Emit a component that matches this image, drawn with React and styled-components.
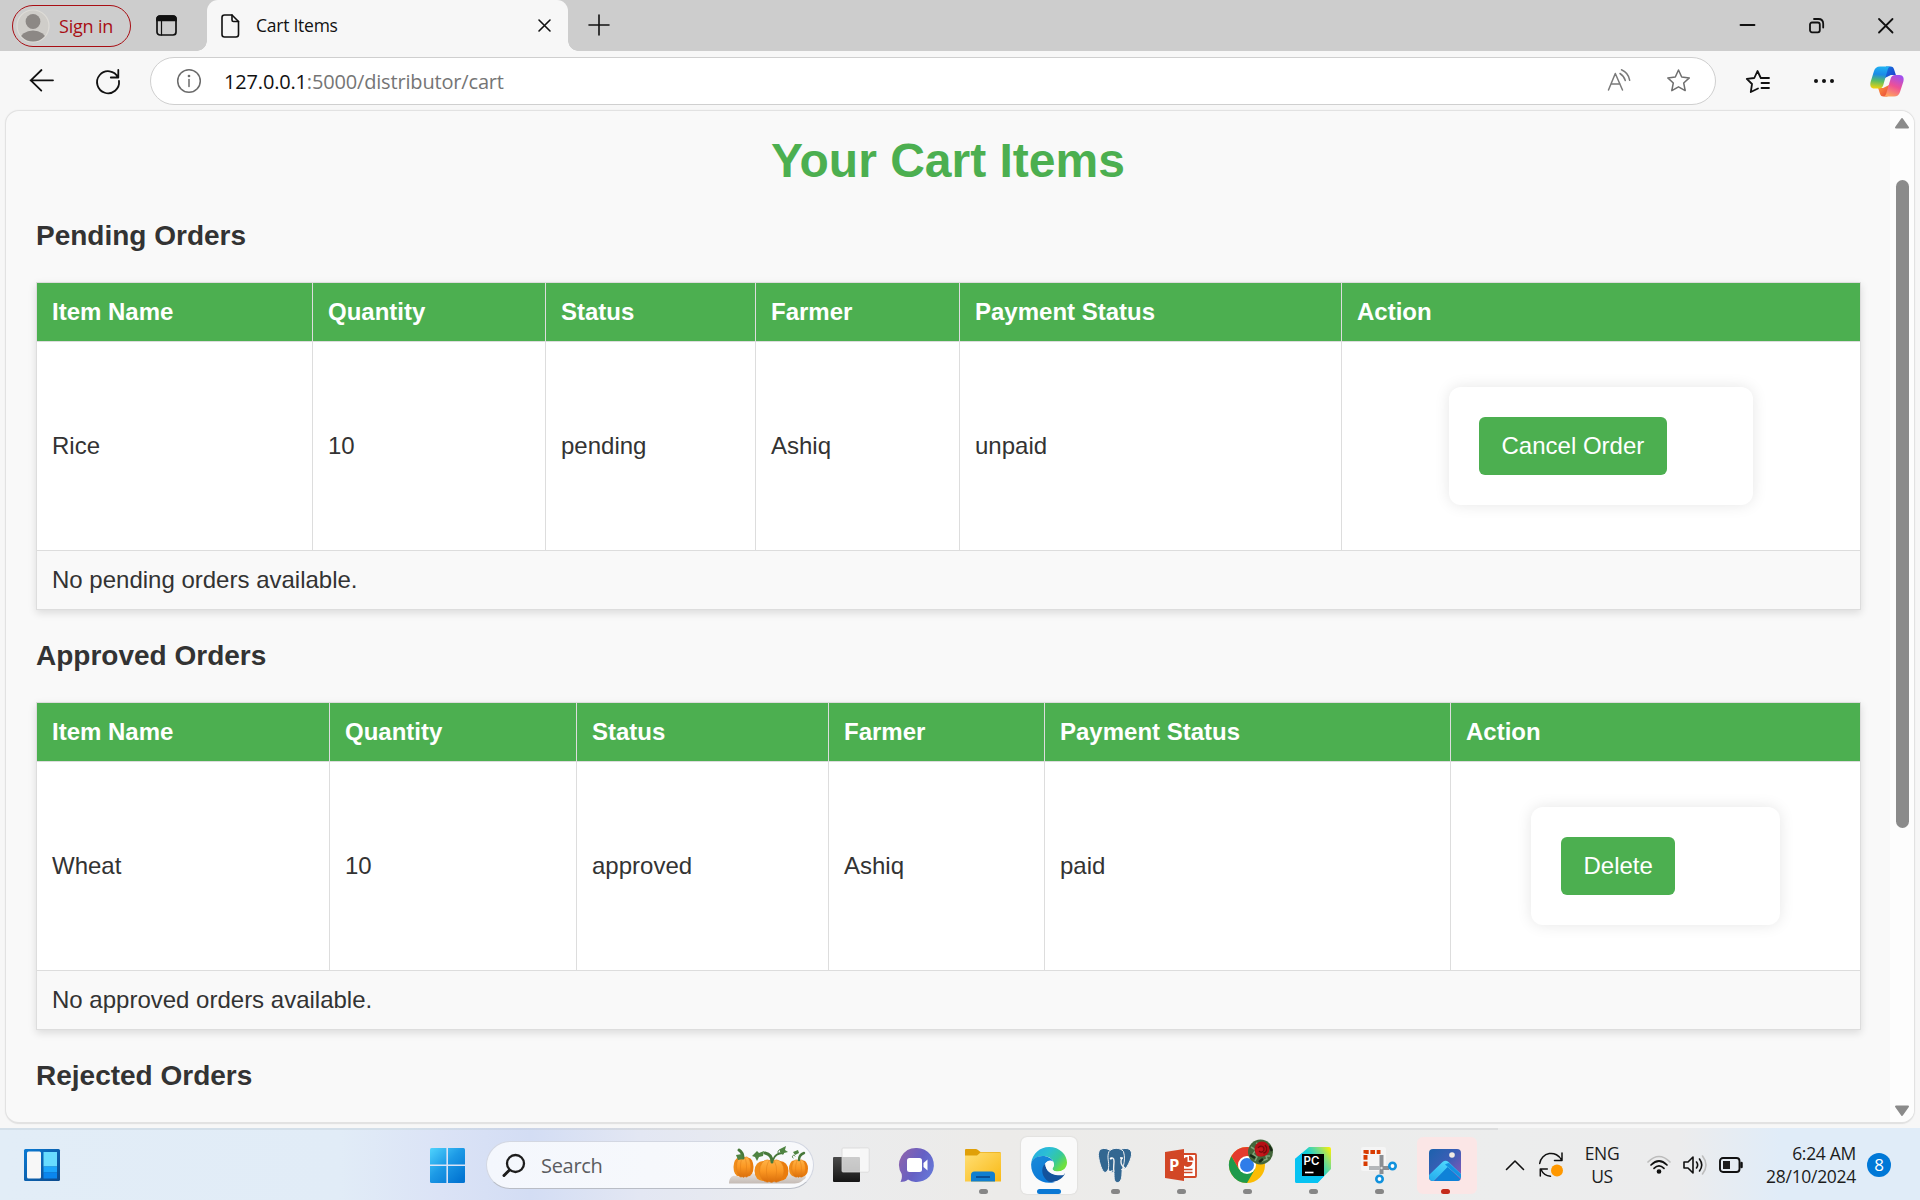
import React from 'react';
import styled, { createGlobalStyle, css } from 'styled-components';

const GlobalStyle = createGlobalStyle`
  * { box-sizing: border-box; }
  body { margin: 0; overflow: hidden; background: #f7f7f7; }
  svg { display: block; flex: none; overflow: visible; }
`;

const uiFont = css`font-family: 'Open Sans', 'Noto Sans', sans-serif;`;

const Screen = styled.div`
  width: 1920px;
  height: 1200px;
  display: flex;
  flex-direction: column;
  background: #f7f7f7;
  overflow: hidden;
`;

/* ---------- Tab strip ---------- */
const TabStrip = styled.header`
  height: 51px;
  flex: none;
  display: flex;
  background: #cdcdcd;
  ${uiFont}
`;

const SignIn = styled.button`
  display: flex;
  align-items: center;
  gap: 9px;
  width: 119px;
  height: 42px;
  margin: 5px 0 0 12px;
  padding: 0 0 1px 3px;
  border: 1.5px solid #a80e14;
  border-radius: 21px;
  background: transparent;
  color: #a80e14;
  ${uiFont}
  font-size: 18px;
  letter-spacing: -0.2px;
  white-space: nowrap;
`;

const Workspaces = styled.div`
  width: 76px;
  padding: 15px 0 0 25px;
`;

const Tab = styled.div`
  position: relative;
  width: 361px;
  height: 51px;
  display: flex;
  align-items: center;
  padding: 0 16px 0 13px;
  border-radius: 11px 11px 0 0;
  background: #f7f7f7;
  &::before, &::after {
    content: '';
    position: absolute;
    bottom: 0;
    width: 10px;
    height: 10px;
  }
  &::before { left: -10px; background: radial-gradient(circle at 0 0, transparent 9.5px, #f7f7f7 10px); }
  &::after { right: -10px; background: radial-gradient(circle at 100% 0, transparent 9.5px, #f7f7f7 10px); }
`;

const TabTitle = styled.span`
  flex: 1;
  margin: 0 0 1px 16px;
  font-size: 17.5px;
  letter-spacing: -0.25px;
  color: #111;
`;

const NewTab = styled.div`padding: 15px 0 0 21px;`;

const WindowControls = styled.div`
  display: flex;
  gap: 54px;
  margin-left: auto;
  padding: 18px 27px 0 0;
`;

/* ---------- Toolbar ---------- */
const Toolbar = styled.div`
  height: 59px;
  flex: none;
  display: flex;
  align-items: flex-start;
  padding-left: 30px;
  ${uiFont}
`;

const NavButtons = styled.div`
  display: flex;
  gap: 42px;
  width: 120px;
  padding-top: 18px;
`;

const AddressBar = styled.div`
  width: 1566px;
  height: 48px;
  margin-top: 6px;
  display: flex;
  align-items: center;
  padding: 0 25px 0 26px;
  border: 1.5px solid #cfcfcf;
  border-radius: 24px;
  background: #fff;
`;

const Url = styled.span`
  flex: 1;
  margin-left: 23px;
  font-size: 20px;
  letter-spacing: -0.17px;
  color: #757575;
  b { font-weight: 400; color: #111; }
`;

const BarIcons = styled.div`display: flex; gap: 36px;`;

const ToolIcons = styled.div`
  display: flex;
  align-items: center;
  height: 60px;
  margin-left: 30px;
`;

const Spacer = styled.i`width: ${(p) => p.$w}px; flex: none;`;

/* ---------- Page ---------- */
const Viewport = styled.main`
  width: 1910px;
  height: 1014px;
  margin: 0 0 4px 5px;
  flex: none;
  display: flex;
  overflow: hidden;
  border: 1px solid #e2e2e2;
  border-bottom-width: 2px;
  border-radius: 14px;
  background: #f9f9f9;
  box-shadow: 0 0 2px rgba(0, 0, 0, 0.05);
`;

const Page = styled.div`
  flex: 1;
  padding: 22px 30px 0 30px;
  overflow: hidden;
  color: #333;
  font-family: 'Liberation Sans', Arial, sans-serif;
  font-size: 24px;
`;

const Title = styled.h1`
  margin: 0 0 31px;
  font-size: 48px;
  line-height: 56px;
  text-align: center;
  color: #4caf50;
`;

const Heading = styled.h3`
  margin: 0;
  font-size: 28px;
  line-height: 32px;
`;

const Table = styled.table`
  width: 1825px;
  margin: 30px 0;
  table-layout: fixed;
  border-collapse: separate;
  border-spacing: 0;
  border: solid #ddd;
  border-width: 1px 0 0 1px;
  background: #fff;
  box-shadow: 0 3px 8px rgba(0, 0, 0, 0.12);
`;

const cell = css`
  padding: 0 15px;
  text-align: left;
  border: solid #ddd;
  border-width: 0 1px 1px 0;
`;

const Th = styled.th`
  ${cell}
  height: 59px;
  background: #4caf50;
  color: #fff;
`;

const Td = styled.td`
  ${cell}
  height: ${(p) => (p.$note ? 59 : 209)}px;
  background: ${(p) => (p.$note ? '#f9f9f9' : '#fff')};
`;

const ActionCard = styled.div`
  width: ${(p) => p.$w}px;
  margin: 0 auto;
  padding: 30px;
  border-radius: 12px;
  background: #fff;
  box-shadow: 0 0 15px rgba(0, 0, 0, 0.1);
`;

const ActionButton = styled.button`
  display: block;
  height: 58px;
  padding: 0 22.5px;
  border: 0;
  border-radius: 6px;
  background: #4caf50;
  color: #fff;
  font: inherit;
`;

const ScrollTrack = styled.div`
  width: 24px;
  display: flex;
  flex-direction: column;
  align-items: center;
  padding: 7px 0 6px;
  background: #fdfdfd;
`;

const Thumb = styled.div`
  width: 13px;
  height: 648px;
  margin: 52px 0 auto;
  border-radius: 7px;
  background: #8b8b8b;
`;

/* ---------- Taskbar ---------- */
const Taskbar = styled.footer`
  height: 72px;
  flex: none;
  display: flex;
  border-top: 2px solid #d6dde5;
  border-image: linear-gradient(90deg, #d3dfe9 0 400px, #cad4e8 520px, #dcddde 700px 1497px, transparent 1497px) 1;
  background: linear-gradient(90deg, #e2edf7 0, #e1ecf7 340px, #dbe3f6 440px, #d3ddf4 530px, #e3e7f3 640px, #ebecee 800px, #ecebe9 1000px, #eceded 1500px, #ececed 1680px, #e0ecf8 1780px, #e0ecf8 100%);
  ${uiFont}
  color: #1c1c1c;
`;

const WidgetsButton = styled.div`width: 430px; padding: 19px 0 0 24px;`;
const StartButton = styled.div`width: 56px; padding-top: 18px;`;

const SearchBox = styled.div`
  width: 328px;
  height: 48px;
  margin: 11px 4px 0 0;
  padding: 0 4px 0 16px;
  display: flex;
  align-items: center;
  border: 1.5px solid #d3d7e2;
  border-bottom-color: #b9bdc6;
  border-radius: 24px;
  background: linear-gradient(90deg, #f4f7fd, #f8f9fb);
`;

const SearchText = styled.span`
  flex: 1;
  margin: 0 0 0 16px;
  font-size: 20px;
  letter-spacing: -0.3px;
  color: #5b5c60;
`;

const Apps = styled.nav`display: flex;`;

const AppTile = styled.div`
  width: 56px;
  height: 57px;
  margin: 7px 5px 0;
  padding-top: 10px;
  display: flex;
  flex-direction: column;
  align-items: center;
  justify-content: space-between;
  border-radius: 6px;
  ${(p) => p.$state === 'active' && css`background: #fafafa; box-shadow: 0 0 2px rgba(0, 0, 0, 0.14);`}
  ${(p) => p.$state === 'alert' && css`background: #fbe6e6; box-shadow: 4px 0 0 #fbe6e6;`}
`;

const Indicator = styled.div`
  width: ${(p) => (p.$state === 'active' ? 24 : 9)}px;
  height: 5px;
  border-radius: 3px;
  background: ${(p) => ({ active: '#0a78d4', alert: '#c42b1c', open: '#868686' }[p.$state] || 'transparent')};
`;

const Tray = styled.div`
  flex: 1;
  display: flex;
  align-items: center;
  height: 69px;
  padding-left: 28px;
`;

const TrayText = styled.div`
  width: ${(p) => p.$w}px;
  flex: none;
  text-align: ${(p) => p.$align};
  font-size: 17.5px;
  line-height: 22.5px;
  letter-spacing: ${(p) => p.$track}px;
  white-space: nowrap;
`;

const Badge = styled.div`
  width: 24px;
  height: 24px;
  border-radius: 50%;
  display: flex;
  align-items: center;
  justify-content: center;
  background: #0078d7;
  color: #fff;
  font-size: 17px;
  line-height: 24px;
`;

/* ---------- Icons ---------- */
const Line = ({ w, h, sw = 1.6, c = '#111', children }) => (
  <svg width={w} height={h} viewBox={`0 0 ${w} ${h}`} fill="none" stroke={c} strokeWidth={sw} strokeLinecap="round" strokeLinejoin="round">{children}</svg>
);

const Avatar = () => (
  <svg width="34" height="34" viewBox="0 0 34 34">
    <defs><clipPath id="av"><circle cx="17" cy="17" r="15.5" /></clipPath></defs>
    <circle cx="17" cy="17" r="16" fill="#cfcdc9" stroke="#dedcd7" strokeWidth="1.2" />
    <g fill="#8c8885" clipPath="url(#av)"><circle cx="17" cy="12.5" r="7.4" /><ellipse cx="17" cy="31" rx="13" ry="9.5" /></g>
  </svg>
);

const STAR = 'M11.5 1 L14.7 8 L22.3 8.9 L16.7 14 L18.2 21.6 L11.5 17.8 L4.8 21.6 L6.3 14 L0.8 8.9 L8.3 8 Z';

const Copilot = () => (
  <svg width="34" height="31" viewBox="0 0 34 31">
    <defs>
      <linearGradient id="cpA" x1="0.4" y1="0" x2="0.3" y2="1"><stop offset="0" stopColor="#1fb1f2" /><stop offset=".35" stopColor="#1c8ae6" /><stop offset=".65" stopColor="#5bbd63" /><stop offset="1" stopColor="#f4d30b" /></linearGradient>
      <linearGradient id="cpB" x1="0.7" y1="0" x2="0.3" y2="1"><stop offset="0" stopColor="#a04ff0" /><stop offset=".5" stopColor="#ee5096" /><stop offset="1" stopColor="#ffa45c" /></linearGradient>
      <linearGradient id="cpC" x1="0" y1="0" x2="1" y2="1"><stop offset="0" stopColor="#1577e0" /><stop offset="1" stopColor="#1f3ccb" /></linearGradient>
      <linearGradient id="cpD" x1="0" y1="0" x2="1" y2="1"><stop offset="0" stopColor="#ff9b3d" /><stop offset="1" stopColor="#e8453c" /></linearGradient>
    </defs>
    <path d="M16 .5h4.500c2.300 0 3 1.200 3.600 3l1.800 5.500h-5l-6 3z" fill="url(#cpC)" />
    <path d="M17.500 30.500h-4c-2.300 0-3-1.200-3.600-3l-1.800-5.500h5l6-3z" fill="url(#cpD)" />
    <path d="M10 .5h11c-2 0-2.800 1.500-3.400 3.500l-4.300 15c-.7 2.400-2 3.600-4.600 3.600H4.500C.8 22.600-.3 19.600.6 16L4 5C5 2 6.800.5 10 .5z" fill="url(#cpA)" />
    <path d="M24 30.500H13c2 0 2.800-1.500 3.400-3.500l4.300-14.500c.7-2.400 2-3.600 4.600-3.600h4.200c3.700 0 4.800 3 3.900 6.600L30 26c-1 3-2.800 4.500-6 4.500z" fill="url(#cpB)" />
  </svg>
);

const Widgets = () => (
  <svg width="36" height="32" viewBox="0 0 36 32">
    <defs><linearGradient id="wg" x1="0" y1="0" x2="1" y2="1"><stop offset="0" stopColor="#0a7ad4" /><stop offset="1" stopColor="#0d4a8c" /></linearGradient></defs>
    <rect width="36" height="32" rx="1.5" fill="url(#wg)" />
    <rect x="3" y="2.5" width="14" height="27" rx="1.5" fill="#f7f7f7" />
    <path d="M19.500 3h13.500v14.500h-13.500z" fill="#68dcff" /><path d="M19.500 17.500h13.500v6h-13.500z" fill="#1ba5fb" /><path d="M19.500 23.500h13.500v6h-13.500z" fill="#0a86ee" />
  </svg>
);

const Start = () => (
  <svg width="35" height="35" viewBox="0 0 35 35">
    <defs><linearGradient id="st" gradientUnits="userSpaceOnUse" x1="0" y1="0" x2="30" y2="33"><stop offset="0" stopColor="#4fd3fd" /><stop offset=".5" stopColor="#1d9ae6" /><stop offset="1" stopColor="#0375d2" /></linearGradient></defs>
    <g fill="url(#st)"><path d="M1.500 0h14.900v16.400H0V1.500Q0 0 1.500 0z" /><path d="M18 0h15.500Q35 0 35 1.500v14.900H18z" /><path d="M0 18h16.400v17H1.500Q0 35 0 33.500z" /><path d="M18 18h17v15.500Q35 35 33.500 35H18z" /></g>
  </svg>
);

const Pumpkin = ({ x, y, rx, ry }) => (
  <g transform={`translate(${x} ${y})`}>
    <ellipse cx={-rx * 0.5} rx={rx * 0.5} ry={ry * 0.88} fill="#f08c1a" />
    <ellipse cx={rx * 0.5} rx={rx * 0.5} ry={ry * 0.88} fill="#ea7c0c" />
    <ellipse cx={-rx * 0.25} rx={rx * 0.45} ry={ry * 0.97} fill="url(#pk)" stroke="#e07c16" strokeWidth=".5" />
    <ellipse cx={rx * 0.28} rx={rx * 0.45} ry={ry * 0.97} fill="url(#pk)" stroke="#e07c16" strokeWidth=".5" />
    <ellipse rx={rx * 0.3} ry={ry} fill="url(#pk)" stroke="#e07c16" strokeWidth=".5" />
  </g>
);

const Pumpkins = () => (
  <svg width="80" height="38" viewBox="0 0 80 38">
    <defs>
      <linearGradient id="pk" x1="0" y1="0" x2="0" y2="1"><stop offset="0" stopColor="#ffb347" /><stop offset=".5" stopColor="#fb9722" /><stop offset="1" stopColor="#d96d0a" /></linearGradient>
      <linearGradient id="rk" x1="0" y1="0" x2="0" y2="1"><stop offset="0" stopColor="#eeeae6" /><stop offset="1" stopColor="#c4bbb5" /></linearGradient>
    </defs>
    <path d="M0 37.500C0 30 5 28 10 31c4-5 14-6 19-1 6-5 22-6 28-1 4-5 11-6 14-1 6 0 8 4 3 6-2 3-7 3.500-12 3.500z" fill="url(#rk)" />
    <Pumpkin x={14.5} y={21} rx={10} ry={10.500} />
    <Pumpkin x={69.5} y={22.5} rx={9.5} ry={9} />
    <Pumpkin x={42.5} y={25} rx={17} ry={11.5} />
    <g fill="none" stroke="#47783a" strokeLinecap="round">
      <path d="M14 12C14 8 13 6 10 4" strokeWidth="3" />
      <path d="M43 16c0-5-2-8-7-9" strokeWidth="3" />
      <path d="M44 14c2-6 7-7 10-7" strokeWidth="1.800" />
      <path d="M70 14c0-4 2-6 5-7" strokeWidth="2.400" />
      <path d="M49 7c-1-4 5-5 4-1M64 12c-2-2 1-4 2-2" strokeWidth="1" />
    </g>
    <g fill="#4f8442"><path d="M23 10l5-5 2 2 5-2-1 5-4 1-2 4-2-4z" /><path d="M51 3l6-3-1 4 3 2-4 1-1 2-3-3z" /><path d="M7 9l6-1 1 5-5 1z" /><path d="M64 6l5-2 1 3-4 2z" /></g>
  </svg>
);

const TaskView = () => (
  <svg width="36" height="36" viewBox="0 0 36 36">
    <defs><linearGradient id="tv" x1="0" y1="0" x2="0" y2="1"><stop offset="0" stopColor="#4b4b4b" /><stop offset="1" stopColor="#151515" /></linearGradient></defs>
    <rect x="0" y="10" width="27" height="25" rx="1" fill="url(#tv)" />
    <rect x="9" y="1" width="27" height="24" rx="1" fill="#fff" fillOpacity=".72" stroke="#d5d5d5" strokeWidth=".8" />
    <rect x="27" y="1.5" width="8.5" height="23" fill="#f5f5f5" fillOpacity=".7" />
  </svg>
);

const Chat = () => (
  <svg width="36" height="36" viewBox="0 0 36 36">
    <defs><linearGradient id="ch" x1="0" y1="0.2" x2="1" y2=".7"><stop offset="0" stopColor="#8d63ac" /><stop offset=".55" stopColor="#6560c4" /><stop offset="1" stopColor="#6678d8" /></linearGradient></defs>
    <path d="M18 1a17 17 0 1 1-9 31.500c-2 1.800-5 2.500-7.500 2.500 1.200-2.500 1.800-5 1.200-8A17 17 0 0 1 18 1z" fill="url(#ch)" />
    <rect x="8" y="11" width="15" height="14" rx="2.5" fill="#fff" /><path d="M24.500 16l4-3.500v11l-4-3.500z" fill="#fff" />
  </svg>
);

const Folder = () => (
  <svg width="36" height="36" viewBox="0 0 36 36">
    <defs><linearGradient id="fo" x1="0" y1="0" x2="1" y2="1"><stop offset="0" stopColor="#ffdf75" /><stop offset="1" stopColor="#f9b915" /></linearGradient></defs>
    <path d="M0 3q0-1 1-1h9.500q1.500 0 2.500 1l2.500 2H34.500q1.500 0 1.500 1.500V12H0z" fill="#e0a008" />
    <path d="M0 8.500h12l3.500-3H35q1 0 1 1V34.500H0z" fill="url(#fo)" />
    <path d="M6 34.500V28q0-3.500 3.500-3.500h17Q30 24.500 30 28v6.500z" fill="#0f7fd0" /><path d="M11 30h14" stroke="#0b4a8e" strokeWidth="1.800" />
  </svg>
);

const Edge = () => (
  <svg width="36" height="36" viewBox="0 0 36 36">
    <defs>
      <linearGradient id="e1" x1="0" y1="0" x2="1" y2=".6"><stop offset="0" stopColor="#23a8e8" /><stop offset=".45" stopColor="#2cbfd2" /><stop offset=".75" stopColor="#35c99a" /><stop offset="1" stopColor="#6fe03f" /></linearGradient>
      <linearGradient id="e2" x1="0" y1="0" x2="0.6" y2="1"><stop offset="0" stopColor="#1b8ad8" /><stop offset="1" stopColor="#0a78d8" /></linearGradient>
    </defs>
    <path d="M.2 16C1.500 6.500 9 0 18 0c11 0 18 8 18 15.500 0 5-4 9-9 9-4 0-6-1.500-5.500-3 .6-1 1.500-2 1.500-4 0-5-5-8.500-11-8.500C6 9 2 12 .2 16z" fill="url(#e1)" />
    <path d="M.1 17.500C.5 12 5.500 9 11.500 9c5 0 9.500 2.500 11 6-1.500-1.800-4-2-6-.8-4.500 2.600-4.500 8.800-1.500 13.800 2 3.500 5 6.500 9 7C12 38.500 0 31 .1 17.500z" fill="url(#e2)" />
    <path d="M14.200 16.500c-5 5-3.500 14 3.800 18.200 6.500 1 12.500-2.200 15.600-7.200.6-1-.2-1.400-1-.8-1.500.8-3.500 1.300-5.600 1.300-7 0-12.500-4-12.800-11.500z" fill="#13529c" />
    <path d="M14.400 16.500c1.600-3 6-3.500 7.900-.9 1.500 2.400-.1 4.400-.8 5.900-.5 1.500 1.500 3 5.500 3 2.500 0 4.500-.8 6-2l.6 5C30 29 25 28.500 21 26.500c-4-2-6.600-5.500-6.600-10z" fill="#fafafa" />
  </svg>
);

const Elephant = () => (
  <svg width="36" height="36" viewBox="0 0 36 36">
    <g fill="#336791" stroke="#f1f1f1" strokeWidth="1">
      <path d="M8 1.500C3 1 .8 4.500 1.500 9.500c.8 6 3.500 15.500 6.500 16 2 .2 3-3 4-4.500L14 4c-2-1.500-4-2.300-6-2.500z" />
      <path d="M29 1.500c5 0 6.500 4 5 9-1 4-3.500 9-6 12l-4-3-2-16c2-1.500 4.500-2.200 7-2z" />
      <path d="M12 4.500c3-4 11-4.500 14.500 0 1.500 5 1 10 0 14-.5 2.500-1.500 4-1.500 7.500 0 6-1.500 9.500-4.500 9.500-3.500 0-3.500-4-3.500-10-3.500.5-6-1-5.500-5 1-5-2-10 .5-16z" />
    </g>
    <path d="M13 12c2-2 4-1 4 2 0 4-1 8 0 11M26 11c-2 0-2 2-2 4 0 3 2 5 5 7-2 1.500-4 1-4.500 0M11 24c1.500 1 3 1 4.500-.5" fill="none" stroke="#f1f1f1" strokeWidth="1.400" />
    <circle cx="14" cy="11.5" r="1" fill="#fff" /><circle cx="24" cy="11" r="1" fill="#fff" />
  </svg>
);

const PowerPoint = () => (
  <svg width="36" height="36" viewBox="0 0 36 36">
    <rect x="15" y="7" width="18" height="23" rx="1" fill="#fff" stroke="#d24726" strokeWidth="1.800" />
    <path d="M24.500 10a5 5 0 1 0 5 5h-5z" fill="#d24726" /><path d="M26 8.800a5 5 0 0 1 4.500 4.600H26z" fill="#d24726" />
    <path d="M20 22.500h9.500M20 25.500h9.500" stroke="#d24726" strokeWidth="1.500" />
    <path d="M2 5L21 2v32L2 31z" fill="#d24726" />
    <text x="6" y="23.5" fontFamily="Open Sans, sans-serif" fontWeight="700" fontSize="16.5" fill="#fff">P</text>
  </svg>
);

const Chrome = () => (
  <svg width="36" height="36" viewBox="0 0 36 36">
    <circle cx="18" cy="18" r="18" fill="#fbbc04" />
    <path d="M2.400 9A18 18 0 0 0 18 36l7.800-13.500L18 18 10.200 22.500z" fill="#1e9a4b" />
    <path d="M2.400 9A18 18 0 0 1 33.600 9H18l-8 5-.5 7.300z" fill="#e33b2e" />
    <circle cx="18" cy="18" r="9" fill="#fff" /><circle cx="18" cy="18" r="7" fill="#2f7de9" />
    <circle cx="31.5" cy="5" r="12.5" fill="#43663a" />
    <path d="M22 0l5 3-3 4 4 3-2 4M33 14l5-2-1-3 4 0M27-4l4 2" stroke="#7fa27a" strokeWidth="1.500" fill="none" />
    <path d="M21 8l5 3M30 15l4-3M40-1l3 5" stroke="#182a16" strokeWidth="2.500" />
    <circle cx="33" cy="2" r="7.5" fill="#b50f14" /><circle cx="31" cy="5" r="4.5" fill="#c5161b" />
    <path d="M29 1c2-3 6-2 6 1s-3 4-5 2M36-2c3 3 2 8-2 8" stroke="#730a0d" strokeWidth="1.200" fill="none" />
  </svg>
);

const PyCharm = () => (
  <svg width="36" height="36" viewBox="0 0 36 36">
    <defs><linearGradient id="py" x1="0.15" y1="0.6" x2="1" y2="0.05"><stop offset="0" stopColor="#07c3f2" /><stop offset=".4" stopColor="#15cfd5" /><stop offset=".75" stopColor="#8de074" /><stop offset="1" stopColor="#fcf003" /></linearGradient></defs>
    <path d="M14 0h20q2 0 2 2v20L22.500 36H2q-2 0-2-2V12z" fill="url(#py)" />
    <path d="M0 12l7-6v23h22L22.500 36H2q-2 0-2-2z" fill="#07c3f2" />
    <rect x="7" y="7" width="22" height="22" fill="#000" />
    <text x="8.5" y="18" fontFamily="Inter, sans-serif" fontWeight="600" fontSize="11.5" fill="#fff">PC</text>
    <path d="M10 25.500h8.500" stroke="#fff" strokeWidth="1.600" />
  </svg>
);

const Snip = () => (
  <svg width="36" height="36" viewBox="0 0 36 36">
    <rect x="0" y="0" width="25" height="24" rx="2" fill="#f5f5f5" />
    <path d="M4.500 19V5h15" fill="none" stroke="#d83b01" strokeWidth="4" strokeDasharray="4.600 1.700" />
    <g stroke="#8a8e93" strokeWidth="4" fill="none"><path d="M20.500 8v19" /><path d="M8 21h20" /></g>
    <path d="M8 21h11" stroke="#b4b7ba" strokeWidth="4" />
    <circle cx="20.5" cy="21" r="1.200" fill="#ddd" />
    <g fill="#fff" stroke="#1192dd" strokeWidth="2.600"><circle cx="31.5" cy="19" r="3.200" /><circle cx="18.5" cy="32" r="3.200" /></g>
  </svg>
);

const Photos = () => (
  <svg width="36" height="36" viewBox="0 0 36 36">
    <defs>
      <linearGradient id="ph" x1="0" y1="0" x2="1" y2=".9"><stop offset="0" stopColor="#1c62ad" /><stop offset=".5" stopColor="#3b5eb5" /><stop offset="1" stopColor="#8a57b8" /></linearGradient>
      <linearGradient id="ph2" x1="0" y1="1" x2=".7" y2="0"><stop offset="0" stopColor="#1ea6ea" /><stop offset="1" stopColor="#54dcff" /></linearGradient>
      <clipPath id="phc"><rect x="2" y="2" width="32" height="32" rx="4" /></clipPath>
    </defs>
    <g clipPath="url(#phc)">
      <rect x="2" y="2" width="32" height="32" fill="url(#ph)" />
      <path d="M6 37L19.500 19 38 37z" fill="#0f82d8" />
      <path d="M0 30L15.500 15q3-2.500 6 0L37 30v4L20.500 20 5 36H0z" fill="url(#ph2)" />
      <path d="M18 17.500q2-1.500 4-1.500L36 29v4z" fill="#1492e2" />
    </g>
    <circle cx="25" cy="8" r="2.800" fill="#f3ece4" />
  </svg>
);

const apps = [
  [TaskView], [Chat], [Folder, 'open'], [Edge, 'active'], [Elephant, 'open'],
  [PowerPoint, 'open'], [Chrome, 'open'], [PyCharm, 'open'], [Snip, 'open'], [Photos, 'alert'],
];

const columns = ['Item Name', 'Quantity', 'Status', 'Farmer', 'Payment Status', 'Action'];

function OrdersTable({ title, widths, row, action, cardWidth, note }) {
  return (
    <>
      <Heading>{title}</Heading>
      <Table>
        <colgroup>{widths.map((w, i) => <col key={i} width={w} />)}</colgroup>
        <thead><tr>{columns.map((c) => <Th key={c}>{c}</Th>)}</tr></thead>
        <tbody>
          <tr>
            {row.map((v, i) => <Td key={i}>{v}</Td>)}
            <Td><ActionCard $w={cardWidth}><ActionButton>{action}</ActionButton></ActionCard></Td>
          </tr>
          <tr><Td $note colSpan={6}>{note}</Td></tr>
        </tbody>
      </Table>
    </>
  );
}

export default function App() {
  return (
    <Screen>
      <GlobalStyle />
      <TabStrip>
        <SignIn><Avatar />Sign in</SignIn>
        <Workspaces>
          <Line w={21} h={21} sw={1.7}>
            <rect x="1" y="1" width="19" height="19" rx="3" />
            <path d="M1 5.500V4q0-3 3-3h13q3 0 3 3v1.500z" fill="#111" />
            <path d="M5.500 6v14" strokeWidth="1.200" />
          </Line>
        </Workspaces>
        <Tab>
          <Line w={20} h={24} sw={1.6}><path d="M4.500 1H12l6.500 6.500V20.500q0 2.500-2.500 2.500H4.500Q2 23 2 20.500V3.500Q2 1 4.500 1z" /><path d="M12 1v5q0 1.500 1.500 1.500h5" /></Line>
          <TabTitle>Cart Items</TabTitle>
          <Line w={15} h={13}><path d="M2 1l11 11M13 1L2 12" /></Line>
        </Tab>
        <NewTab><Line w={20} h={20}><path d="M10 0v20M0 10h20" /></Line></NewTab>
        <WindowControls>
          <Line w={15} h={15} sw={1.8}><path d="M.5 7h14" /></Line>
          <Line w={15} h={15} sw={1.8}><rect x="1" y="4.5" width="9.8" height="9.8" rx="2" /><path d="M5 1h4.500q4.700 0 4.700 4.700V9.500" /></Line>
          <Line w={15} h={15} sw={1.8}><path d="M1 1l13.500 13.500M14.500 1L1 14.500" /></Line>
        </WindowControls>
      </TabStrip>

      <Toolbar>
        <NavButtons>
          <Line w={24} h={24} sw={1.8}><path d="M23 11.300H.5M11.500 1L.8 11.300l10.500 10.300" /></Line>
          <Line w={24} h={24} sw={1.8}><path d="M22 8.500A11 11 0 1 0 23 12M22.300 1v7.500h-7.500" /></Line>
        </NavButtons>
        <AddressBar>
          <Line w={24} h={24} c="#6b6b6b" sw={1.5}><circle cx="12" cy="12" r="11.300" /><path d="M12 10.500v7" /><circle cx="12" cy="7" r=".6" fill="#6b6b6b" /></Line>
          <Url><b>127.0.0.1</b>:5000/distributor/cart</Url>
          <BarIcons>
            <Line w={24} h={24} c="#7a7a7a" sw={1.5}><path d="M1.500 21L8.300 4.500 15.500 21M4 15h9M13 4.500q4 2.500 5.300 7M14.500.8q7 3 8.200 10.500" /></Line>
            <Line w={23} h={24} c="#6f6f6f" sw={1.5}><path d={STAR} /></Line>
          </BarIcons>
        </AddressBar>
        <ToolIcons>
          <Line w={24} h={23} sw={1.8}><path d="M12 18.500L4.800 22 6 14 .8 8.900l7.500-.9L11.500 1l3.300 7H23M15.500 13H23M15.500 18H23" /></Line>
          <Spacer $w={44} />
          <Line w={20} h={6} sw={0}><g fill="#111"><circle cx="2" cy="3" r="2" /><circle cx="10" cy="3" r="2" /><circle cx="18" cy="3" r="2" /></g></Line>
          <Spacer $w={36} />
          <Copilot />
        </ToolIcons>
      </Toolbar>

      <Viewport>
        <Page>
          <Title>Your Cart Items</Title>
          <OrdersTable title="Pending Orders" widths={[276, 233, 210, 204, 382, 519]} row={['Rice', '10', 'pending', 'Ashiq', 'unpaid']} action="Cancel Order" cardWidth={304} note="No pending orders available." />
          <OrdersTable title="Approved Orders" widths={[293, 247, 252, 216, 406, 410]} row={['Wheat', '10', 'approved', 'Ashiq', 'paid']} action="Delete" cardWidth={249} note="No approved orders available." />
          <Heading>Rejected Orders</Heading>
        </Page>
        <ScrollTrack>
          <Line w={14} h={10} c="#8b8b8b" sw={2}><path d="M7 1l6 8.500H1z" fill="#8b8b8b" /></Line>
          <Thumb />
          <Line w={14} h={10} c="#8b8b8b" sw={2}><path d="M1 .5h12L7 9z" fill="#8b8b8b" /></Line>
        </ScrollTrack>
      </Viewport>

      <Taskbar>
        <WidgetsButton><Widgets /></WidgetsButton>
        <StartButton><Start /></StartButton>
        <SearchBox>
          <Line w={22} h={23} sw={2.3} c="#1d1d1d"><circle cx="12.5" cy="9.5" r="8.5" /><path d="M6.500 16L1 21.500" strokeWidth="3" /></Line>
          <SearchText>Search</SearchText>
          <Pumpkins />
        </SearchBox>
        <Apps>
          {apps.map(([Icon, state], i) => (
            <AppTile key={i} $state={state}><Icon /><Indicator $state={state} /></AppTile>
          ))}
        </Apps>
        <Tray>
          <Line w={18} h={10}><path d="M.5 9.500L9 1l8.500 8.500" /></Line>
          <Spacer $w={15} />
          <Line w={24} h={25} sw={1.5}>
            <path d="M.7 11.500A11.500 11.500 0 0 1 22.500 8M23 1v7.500h-7.500M11.500 24.300A11.500 11.500 0 0 1 2 17.500M1.300 24v-7h7" />
            <circle cx="18" cy="18.5" r="6" fill="#ff9800" stroke="none" />
          </Line>
          <Spacer $w={14} />
          <TrayText $w={50} $align="center" $track={-0.4}>ENG<br />US</TrayText>
          <Spacer $w={20} />
          <Line w={24} h={18} sw={1.7}><path d="M1 6Q12-5 23 6" stroke="#bdbdbd" /><path d="M4 9Q12 1 20 9M7 12.300q5-4.800 10 0" /><circle cx="12" cy="15.5" r="1.5" fill="#111" /></Line>
          <Spacer $w={12} />
          <Line w={24} h={20} sw={1.6}><path d="M1 7h4l5-5v16l-5-5H1zM13.500 7q2.300 3 0 6M16.500 4q4.500 6 0 12" /><path d="M19.500 1q7 9 0 18" stroke="#bdbdbd" /></Line>
          <Spacer $w={12} />
          <Line w={24} h={16} sw={1.9}><rect x="1" y="1" width="19.5" height="14" rx="3" /><path d="M22.500 6v4" strokeWidth="2.500" /><rect x="4" y="4" width="7" height="8" fill="#1c1c1c" stroke="none" /></Line>
          <TrayText $w={113} $align="right" $track={-0.3}>6:24 AM<br />28/10/2024</TrayText>
          <Spacer $w={11} />
          <Badge>8</Badge>
        </Tray>
      </Taskbar>
    </Screen>
  );
}
